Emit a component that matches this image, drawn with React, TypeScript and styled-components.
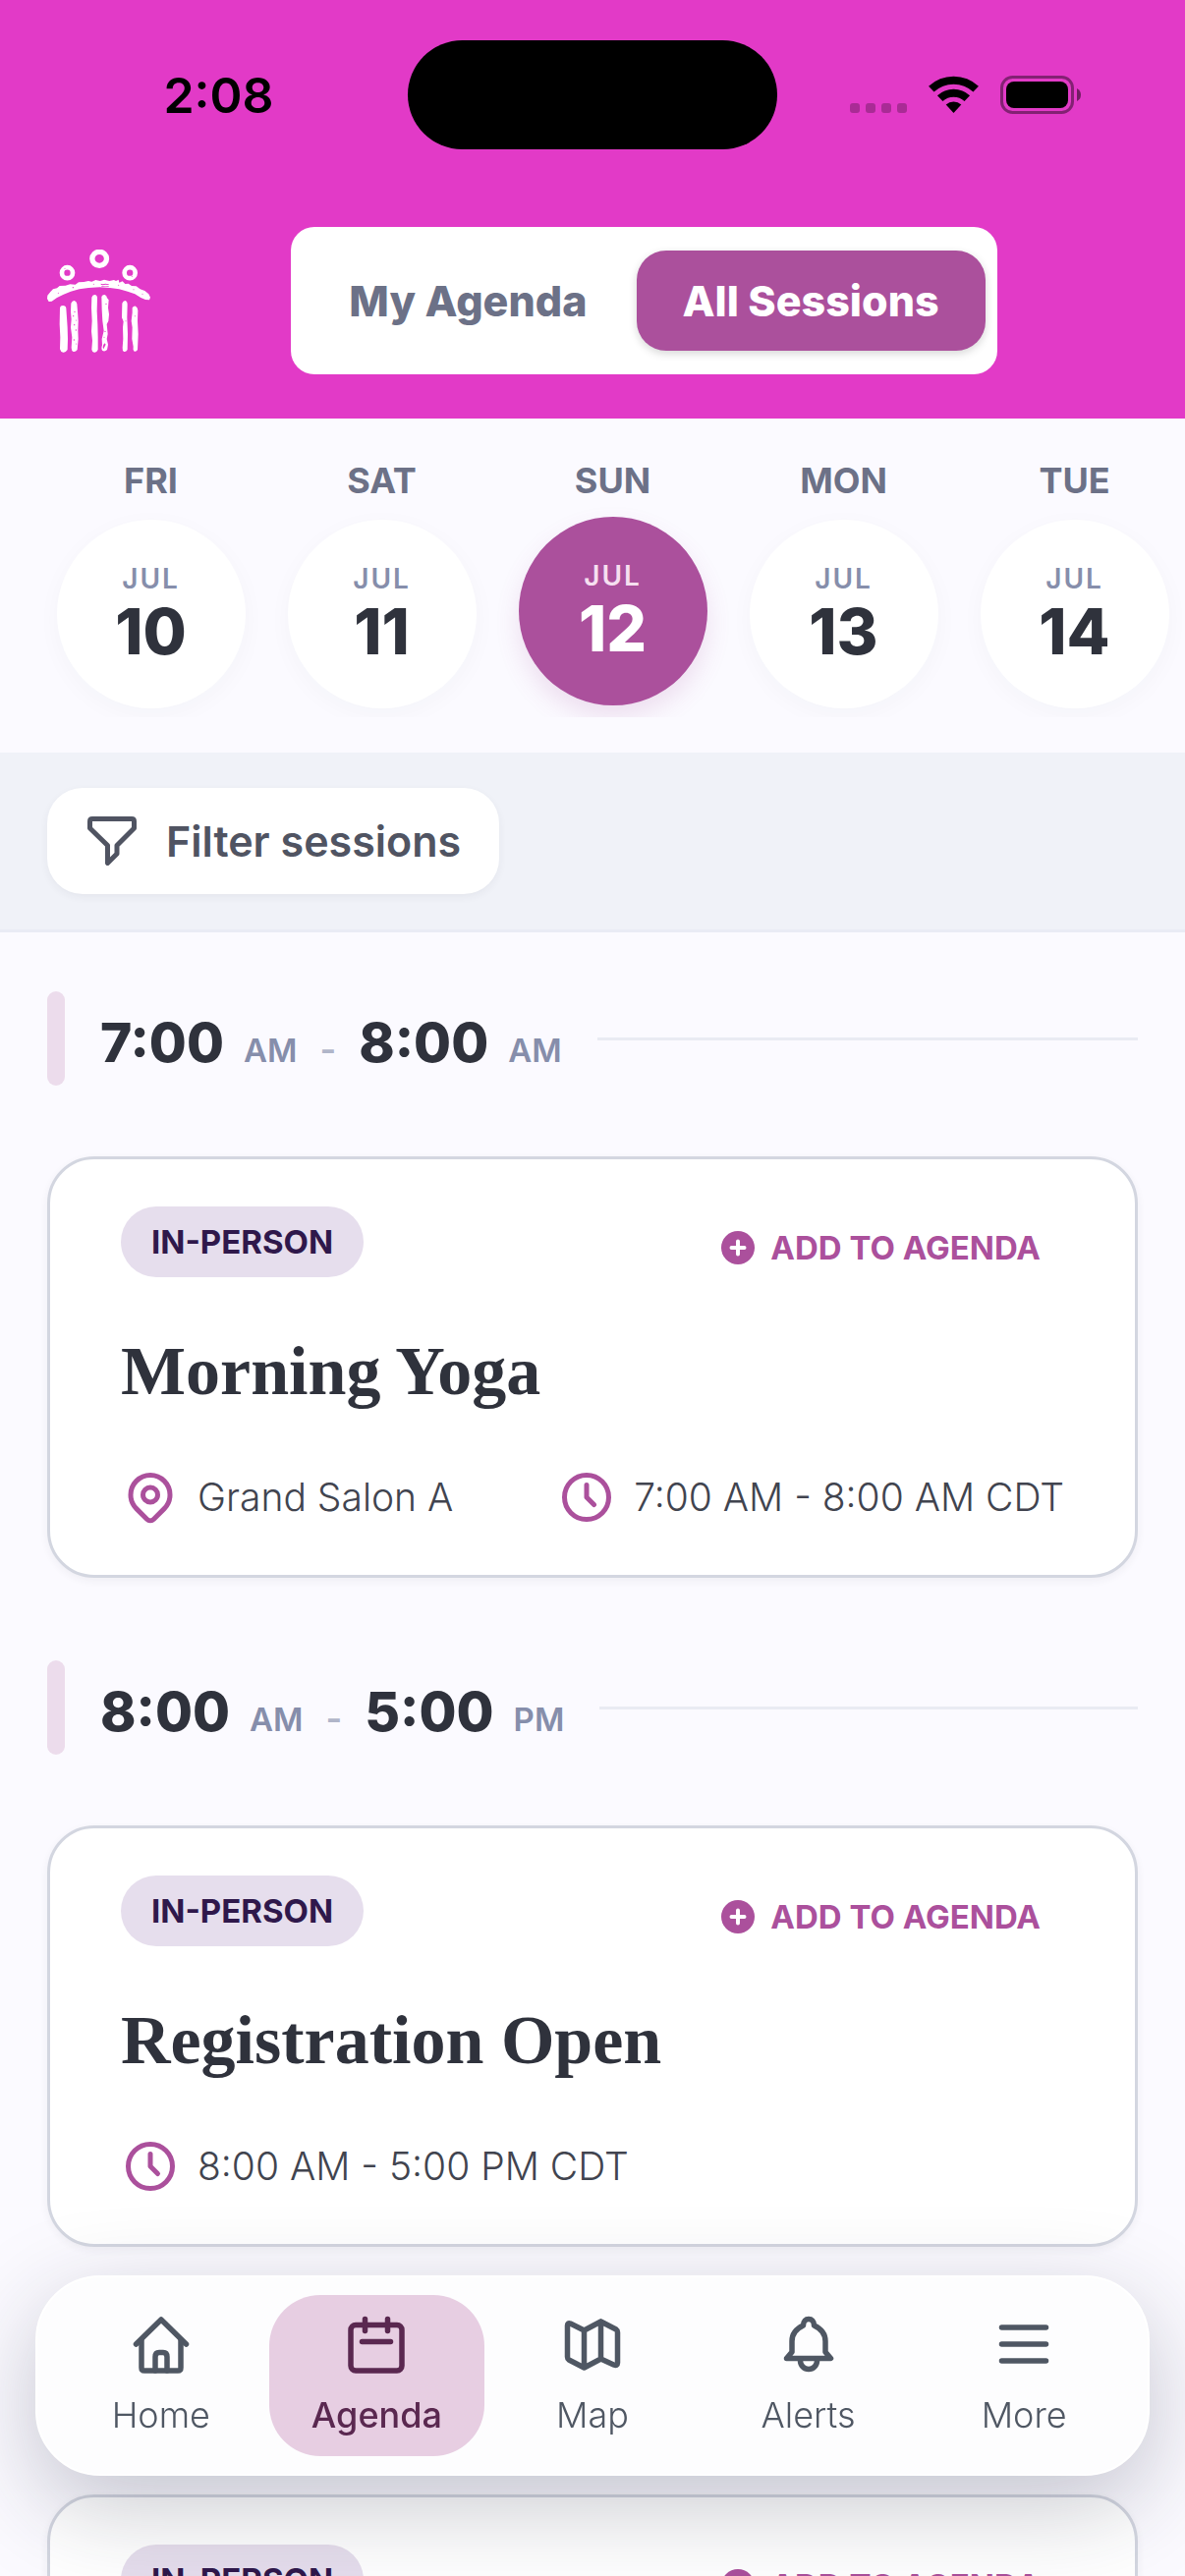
import React, { useState } from "react";
import styled, { createGlobalStyle, css } from "styled-components";

const sans = `Inter, "Open Sans", "Liberation Sans", sans-serif`;
const serif = `"Liberation Serif", "Times New Roman", serif`;

const color = {
  page: "#fbfaff",
  brand: "#e23ac7",
  plum: "#ab509c",
  ink: "#2f323c",
  body: "#41444f",
  slate: "#505462",
  muted: "#6c7187",
  faint: "#868eab",
  nav: "#4f5763",
};

const GlobalStyle = createGlobalStyle`
  * { box-sizing: border-box; }
  html, body { margin: 0; background: ${color.page}; }
  body { font-family: ${sans}; color: ${color.ink}; -webkit-font-smoothing: antialiased; }
  button { font: inherit; border: 0; margin: 0; padding: 0; background: none; color: inherit; cursor: pointer; }
  a { color: inherit; text-decoration: none; }
  h2, h3, p { margin: 0; font: inherit; }
  svg { display: block; flex: none; }
`;

const Screen = styled.div`
  display: flex;
  flex-direction: column;
  height: 100vh;
  overflow: hidden;
`;

const Header = styled.header`
  flex: none;
  padding: 41px 0 45px;
  background: ${color.brand};
`;

const StatusBar = styled.div`
  display: grid;
  grid-template-columns: 1fr 376px 1fr;
  align-items: center;
  color: #000;
`;

const Clock = styled.time`
  padding-left: 30px;
  text-align: center;
  font-size: 50px;
  font-weight: 600;
  line-height: 60px;
`;

const Island = styled.div`
  height: 111px;
  border-radius: 56px;
  background: #000;
`;

const StatusIcons = styled.div`
  display: flex;
  justify-content: center;
  padding-right: 32px;
`;

const TopRow = styled.div`
  display: flex;
  align-items: center;
  margin-top: 79px;
  padding: 0 48px;
`;

const ToggleArea = styled.div`
  flex: 1;
  display: flex;
  justify-content: center;
`;

const Toggle = styled.div`
  display: flex;
  gap: 3px;
  padding: 24px 12px;
  border-radius: 24px;
  background: #fff;
`;

const ToggleButton = styled.button<{ $active: boolean }>`
  height: 102px;
  padding: 0 47px;
  border-radius: 30px;
  font-size: 43px;
  font-weight: 800;
  color: ${color.muted};
  ${(p) =>
    p.$active &&
    css`
      background: ${color.plum};
      color: #fff;
      box-shadow: 0 3px 9px rgba(0, 0, 0, 0.16);
    `}
`;

const DayStrip = styled.nav`
  flex: none;
  padding-bottom: 36px;
`;

const DayScroller = styled.div`
  display: flex;
  gap: 24px;
  padding: 36px 0 9px 48px;
  overflow-x: auto;
  scrollbar-width: none;
`;

const DayButton = styled.button`
  flex: none;
  width: 211px;
  display: flex;
  flex-direction: column;
  align-items: center;
  gap: 13px;
`;

const Weekday = styled.span`
  font-size: 36px;
  line-height: 54px;
  font-weight: 700;
  color: ${color.muted};
`;

const DayCircle = styled.span<{ $active: boolean }>`
  display: flex;
  flex-direction: column;
  align-items: center;
  justify-content: center;
  width: 192px;
  height: 192px;
  border-radius: 50%;
  background: #fff;
  box-shadow: 0 6px 24px rgba(47, 50, 60, 0.03);
  ${(p) =>
    p.$active &&
    css`
      background: ${color.plum};
      transform: translateY(-3px);
      box-shadow: 0 12px 24px rgba(171, 80, 156, 0.16);
    `}
`;

const Month = styled.span<{ $active: boolean }>`
  font-size: 28px;
  line-height: 36px;
  font-weight: 600;
  letter-spacing: 2px;
  color: ${(p) => (p.$active ? "#f6dff0" : color.faint)};
`;

const DayNumber = styled.span<{ $active: boolean }>`
  font-size: 64px;
  line-height: 72px;
  font-weight: 800;
  color: ${(p) => (p.$active ? "#fff" : color.ink)};
`;

const FilterBand = styled.div`
  flex: none;
  padding: 36px 48px;
  background: #f0f2f8;
  border-bottom: 3px solid #e9ebf5;
`;

const FilterButton = styled.button`
  display: flex;
  align-items: center;
  gap: 30px;
  height: 108px;
  padding: 0 39px 0 41px;
  border-radius: 36px;
  background: #fff;
  color: ${color.slate};
  font-size: 43px;
  font-weight: 600;
  box-shadow: 0 3px 9px rgba(47, 50, 60, 0.06);
`;

const Agenda = styled.main`
  flex: 1;
  min-height: 0;
  overflow-y: auto;
  scrollbar-width: none;
  display: flex;
  flex-direction: column;
  gap: 84px;
  padding: 60px 48px;
`;

const Slot = styled.section`
  display: flex;
  flex-direction: column;
  gap: 72px;
`;

const SlotHeader = styled.div`
  display: flex;
  align-items: center;
  gap: 36px;
  height: 96px;

  &::before {
    content: "";
    width: 18px;
    height: 96px;
    border-radius: 9px;
    background: #ecdcec;
  }
  &::after {
    content: "";
    flex: 1;
    height: 3px;
    background: #e9ebf3;
  }
`;

const SlotTitle = styled.h2`
  display: flex;
  align-items: baseline;
  gap: 20px;
  padding-top: 8px;
`;

const Hour = styled.span`
  font-size: 55px;
  line-height: 72px;
  font-weight: 800;
`;

const Meridiem = styled.span`
  font-size: 33px;
  font-weight: 600;
  color: ${color.faint};
`;

const Dash = styled.span`
  padding: 0 3px;
  font-size: 36px;
  font-weight: 600;
  color: #b0b5c9;
`;

const Card = styled.article`
  padding: 48px 72px;
  border: 3px solid #d3d6e0;
  border-radius: 48px;
  background: #fff;
  box-shadow: 0 3px 9px rgba(47, 50, 60, 0.06);
`;

const CardTop = styled.div`
  display: flex;
  justify-content: space-between;
  align-items: flex-start;
`;

const Badge = styled.span`
  height: 72px;
  padding: 0 31px;
  border-radius: 36px;
  background: #e6deed;
  color: #2f184b;
  font-size: 33px;
  line-height: 72px;
  font-weight: 700;
`;

const AddButton = styled.button`
  display: flex;
  align-items: center;
  gap: 16px;
  height: 84px;
  padding: 0 24px;
  color: ${color.plum};
  font-size: 33px;
  font-weight: 700;
`;

const CardTitle = styled.h3`
  margin: 42px 0 54px;
  font-family: ${serif};
  font-size: 70px;
  line-height: 84px;
  font-weight: 700;
`;

const MetaRow = styled.div`
  display: flex;
  justify-content: space-between;
`;

const Meta = styled.p`
  display: flex;
  align-items: center;
  gap: 18px;
  font-size: 39px;
  line-height: 63px;
  font-weight: 300;
  color: ${color.body};

  svg {
    color: ${color.plum};
  }
`;

const TabBar = styled.nav`
  position: fixed;
  left: 36px;
  right: 36px;
  bottom: 102px;
  display: flex;
  padding: 18px 16px;
  border: 2px solid #fff;
  border-radius: 66px;
  background: #fdfdfe;
  box-shadow: 0 30px 96px rgba(30, 35, 60, 0.25);
`;

const TabLink = styled.a<{ $active: boolean }>`
  flex: 1;
  display: flex;
  flex-direction: column;
  align-items: center;
  gap: 20px;
  padding: 20px 0;
  border-radius: 52px;
  font-size: 36px;
  line-height: 44px;
  font-weight: 300;
  color: ${color.nav};
  ${(p) =>
    p.$active &&
    css`
      background: #e7cee2;
      color: #5a2850;
      font-weight: 500;
    `}
`;

const stroke = {
  fill: "none",
  stroke: "currentColor",
  strokeLinecap: "round",
  strokeLinejoin: "round",
} as const;

const Logo = () => (
  <svg width="105" height="105" viewBox="54 72 315 315" role="img" aria-label="Conference">
    <g fill="none" stroke="#fff">
      <ellipse cx="213.500" cy="100" rx="22" ry="21" strokeWidth="16" />
      <circle cx="115.500" cy="143" r="16.500" strokeWidth="14" />
      <circle cx="306.500" cy="143" r="16.500" strokeWidth="14" />
    </g>
    <g fill="#fff">
      <path d="M55 212L64 201L72 193L84 190L92 183L110 182L124 178L140 179L150 172L166 171L180 168L190 170L202 165L216 168L228 164L244 168L258 165L264 168L272 164L274 173L284 169L292 177L302 176L312 183L326 184L338 193L352 198L364 208L369 218L366 226L354 225L340 219L322 208L300 200L274 193L246 189L214 187L180 189L152 193L126 200L104 209L84 219L68 230L59 231L54 222Z" />
      <path d="M93 250Q94 243 102 243Q111 243 112 251L114 280L116 310L117 345L116 378Q110 387 103 386Q95 385 93 376L94 340L92 300Z" />
      <path d="M127 236Q130 228 137 228Q144 230 145 238L147 262L149 290L148 320L149 345L146 378Q141 385 134 384Q128 381 128 372L130 340L126 310L128 285L126 262Z" />
      <path d="M190 218Q192 210 199 210Q207 211 207 220L206 260L208 300L209 340L209 378Q205 387 198 386Q191 385 190 377L192 350L189 322L191 290L189 250Z" />
      <path d="M220 216Q223 209 230 210Q236 212 237 220L242 226L240 250L243 270L241 290L236 300L239 330L236 345L240 362L237 378Q230 385 223 381Q218 376 222 364L221 345L227 320L223 290L221 255Z" />
      <path d="M283 236Q286 228 292 228Q299 230 299 240L298 280L300 330L299 378Q295 385 289 384Q283 381 284 372L286 345L285 310L287 292L282 280Z" />
      <path d="M314 250Q318 244 324 245Q330 248 331 258L330 290L332 330L330 378Q326 385 320 383Q315 379 317 368L313 345L314 310L311 290L314 265Z" />
    </g>
    <g fill={color.brand}>
      <circle cx="108" cy="130" r="1.500" />
      <circle cx="313" cy="154" r="1.500" />
      <circle cx="133" cy="188" r="2" />
      <circle cx="88" cy="205" r="1.500" />
      <circle cx="196" cy="178" r="1.500" />
      <path d="M218 176l6 2l8-2l10 2v2l-10-1l-8 2l-6-2zM220 183l12 1l10-1v2h-22z" />
      <circle cx="272" cy="181" r="1.500" />
      <circle cx="318" cy="194" r="1.500" />
      <circle cx="345" cy="208" r="1.500" />
      <circle cx="138" cy="262" r="2" />
      <circle cx="134" cy="275" r="2" />
      <circle cx="143" cy="288" r="1.500" />
      <circle cx="137" cy="302" r="2" />
      <circle cx="142" cy="318" r="2" />
      <circle cx="136" cy="348" r="2" />
      <circle cx="143" cy="360" r="1.500" />
      <circle cx="234" cy="238" r="2" />
      <circle cx="231" cy="322" r="2" />
      <circle cx="228" cy="340" r="1.500" />
      <path d="M226 362l4-4l3 4l-4 8l-3 6l-2-6z" />
      <circle cx="294" cy="290" r="1.500" />
      <circle cx="322" cy="275" r="1.500" />
    </g>
  </svg>
);

const PhoneStatus = () => (
  <svg width="236" height="40" viewBox="0 0 236 40" aria-hidden="true">
    <g fillOpacity="0.250">
      {[0, 16, 32, 48].map((x) => (
        <rect key={x} x={x} y="28" width="10" height="10" rx="3" />
      ))}
    </g>
    <g fill="none" stroke="#000" strokeWidth="8">
      <path d="M82.800 13.700A33.200 33.200 0 0 1 128.200 13.700" />
      <path d="M91.700 23.200A20.200 20.200 0 0 1 119.300 23.200" />
    </g>
    <path d="M97.700 29.600A11.500 11.500 0 0 1 113.300 29.600L105.500 38Z" />
    <rect x="154.500" y="1.500" width="72" height="36" rx="11" fill="none" stroke="#000" strokeOpacity="0.420" strokeWidth="3" />
    <rect x="159" y="6" width="63" height="27" rx="8" />
    <path d="M231 13Q235 15 235 19.500T231 26Z" fillOpacity="0.500" />
  </svg>
);

const FilterIcon = () => (
  <svg width="50" height="50" viewBox="0 0 50 50" {...stroke} strokeWidth="5" aria-hidden="true">
    <path d="M5 2.500H45Q47.500 2.500 47.500 5V12L30 29.500V38L20.500 47.500V29.500L2.500 12V5Q2.500 2.500 5 2.500Z" />
  </svg>
);

const PinIcon = () => (
  <svg width="60" height="60" viewBox="0 0 24 24" {...stroke} strokeWidth="2" aria-hidden="true">
    <circle cx="12" cy="11" r="3" />
    <path d="M17.657 16.657l-4.243 4.243a2 2 0 0 1 -2.827 0l-4.244 -4.243a8 8 0 1 1 11.314 0z" />
  </svg>
);

const ClockIcon = () => (
  <svg width="60" height="60" viewBox="0 0 24 24" {...stroke} strokeWidth="2" aria-hidden="true">
    <circle cx="12" cy="12" r="9" />
    <path d="M12 7v5l3 3" />
  </svg>
);

const PlusIcon = () => (
  <svg width="34" height="34" viewBox="0 0 34 34" aria-hidden="true">
    <circle cx="17" cy="17" r="17" fill="currentColor" />
    <path d="M17 10.500v13M10.500 17h13" stroke="#fff" strokeWidth="4" strokeLinecap="round" />
  </svg>
);

const tabShapes: Record<string, React.ReactNode> = {
  Home: (
    <>
      <path d="M4.500 30L30 5L55.500 30" />
      <path d="M10 26V54Q10 57 13 57H47Q50 57 50 54V26" />
      <path d="M24 57V43Q24 38.500 28 38.500H32Q36 38.500 36 43V57" />
    </>
  ),
  Agenda: (
    <>
      <rect x="4" y="10.500" width="52" height="46.500" rx="5" />
      <path d="M18.500 4.500V16.500M41.500 4.500V16.500M15.500 27.500H44.500" />
    </>
  ),
  Map: (
    <path d="M21.500 16L7.500 9Q4.500 8 4.500 11V43Q4.500 45 6 46L21.500 54L38.500 45L51.500 51Q55.500 52.500 55.500 49V18Q55.500 16 54 15L38.500 7L21.500 16V54M38.500 7V45" />
  ),
  Alerts: (
    <>
      <path d="M24.500 11C24.500 6.500 27 4.500 30 4.500S35.500 6.500 35.500 11C43 14.500 47 19 47 27V38L52.500 44.500H7.500L13 38V27C13 19 17 14.500 24.500 11Z" />
      <path d="M21.500 45V47A8.500 8.500 0 0 0 38.500 47V45" />
    </>
  ),
  More: <path d="M7.500 13H52.500M7.500 30H52.500M7.500 47H52.500" />,
};

const days = [
  { weekday: "FRI", day: 10 },
  { weekday: "SAT", day: 11 },
  { weekday: "SUN", day: 12 },
  { weekday: "MON", day: 13 },
  { weekday: "TUE", day: 14 },
];

type Time = [string, string];
interface Session {
  id: number;
  time?: { start: Time; end: Time };
  title?: string;
  room?: string;
}

const sessions: Session[] = [
  {
    id: 1,
    time: { start: ["7:00", "AM"], end: ["8:00", "AM"] },
    title: "Morning Yoga",
    room: "Grand Salon A",
  },
  {
    id: 2,
    time: { start: ["8:00", "AM"], end: ["5:00", "PM"] },
    title: "Registration Open",
  },
  { id: 3 },
];

const SessionSlot = ({ time, title, room }: Session) => (
  <Slot>
    <SlotHeader>
      {time && (
        <SlotTitle>
          <Hour>{time.start[0]}</Hour>
          <Meridiem>{time.start[1]}</Meridiem>
          <Dash>-</Dash>
          <Hour>{time.end[0]}</Hour>
          <Meridiem>{time.end[1]}</Meridiem>
        </SlotTitle>
      )}
    </SlotHeader>
    <Card>
      <CardTop>
        <Badge>IN-PERSON</Badge>
        <AddButton type="button">
          <PlusIcon />
          ADD TO AGENDA
        </AddButton>
      </CardTop>
      {title && <CardTitle>{title}</CardTitle>}
      <MetaRow>
        {room && (
          <Meta>
            <PinIcon />
            {room}
          </Meta>
        )}
        {time && (
          <Meta>
            <ClockIcon />
            {`${time.start.join(" ")} - ${time.end.join(" ")} CDT`}
          </Meta>
        )}
      </MetaRow>
    </Card>
  </Slot>
);

export default function App() {
  const [view, setView] = useState("All Sessions");
  const [selected, setSelected] = useState(12);

  return (
    <>
      <GlobalStyle />
      <Screen>
        <Header>
          <StatusBar>
            <Clock>2:08</Clock>
            <Island />
            <StatusIcons>
              <PhoneStatus />
            </StatusIcons>
          </StatusBar>
          <TopRow>
            <Logo />
            <ToggleArea>
              <Toggle>
                {["My Agenda", "All Sessions"].map((name) => (
                  <ToggleButton
                    key={name}
                    type="button"
                    aria-pressed={view === name}
                    $active={view === name}
                    onClick={() => setView(name)}
                  >
                    {name}
                  </ToggleButton>
                ))}
              </Toggle>
            </ToggleArea>
          </TopRow>
        </Header>

        <DayStrip aria-label="Days">
          <DayScroller>
            {days.map(({ weekday, day }) => (
              <DayButton key={day} type="button" onClick={() => setSelected(day)}>
                <Weekday>{weekday}</Weekday>
                <DayCircle $active={day === selected}>
                  <Month $active={day === selected}>JUL</Month>
                  <DayNumber $active={day === selected}>{day}</DayNumber>
                </DayCircle>
              </DayButton>
            ))}
          </DayScroller>
        </DayStrip>

        <FilterBand>
          <FilterButton type="button">
            <FilterIcon />
            Filter sessions
          </FilterButton>
        </FilterBand>

        <Agenda>
          {sessions.map((session) => (
            <SessionSlot key={session.id} {...session} />
          ))}
        </Agenda>

        <TabBar aria-label="Main">
          {Object.entries(tabShapes).map(([name, shape]) => (
            <TabLink key={name} href={`#${name.toLowerCase()}`} $active={name === "Agenda"}>
              <svg width="60" height="60" viewBox="0 0 60 60" {...stroke} strokeWidth="5.500" aria-hidden="true">
                {shape}
              </svg>
              {name}
            </TabLink>
          ))}
        </TabBar>
      </Screen>
    </>
  );
}
